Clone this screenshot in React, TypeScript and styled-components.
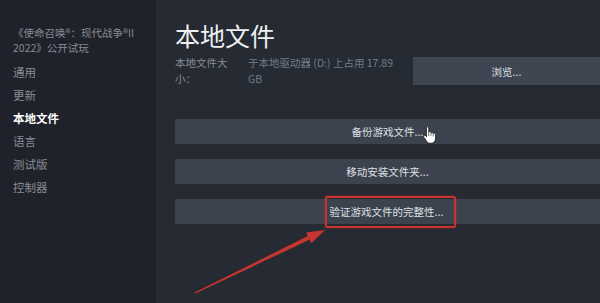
import styled, { createGlobalStyle } from 'styled-components';

const GlobalStyle = createGlobalStyle`
  html, body {
    margin: 0;
    padding: 0;
    background: #262a33;
  }
  body {
    font-family: "Noto Sans CJK SC", "Noto Sans", sans-serif;
  }
`;

const Page = styled.div`
  position: relative;
  display: flex;
  width: 600px;
  height: 303px;
  overflow: hidden;
  background: #262a33;
`;

const Sidebar = styled.nav`
  width: 156px;
  flex-shrink: 0;
  padding: 25px 0 0 13px;
  box-sizing: border-box;
  background: #1f222a;
  display: flex;
  flex-direction: column;
`;

const GameTitle = styled.div`
  width: 124px;
  font-size: 10.5px;
  line-height: 15px;
  color: #868c95;
  margin-bottom: 6px;
`;

const NavItem = styled.div<{ $active?: boolean }>`
  height: 23px;
  line-height: 23px;
  font-size: 11.5px;
  color: ${(p) => (p.$active ? '#ffffff' : '#878d96')};
  font-weight: ${(p) => (p.$active ? 700 : 400)};
`;

const Main = styled.main`
  flex: 1;
  padding: 22px 0 0 19px;
  display: flex;
  flex-direction: column;
`;

const Title = styled.h1`
  margin: 0;
  font-size: 25px;
  line-height: 26px;
  font-weight: 400;
  color: #eef0f2;
`;

const InfoRow = styled.div`
  display: flex;
  align-items: flex-start;
  margin-top: 7px;
`;

const InfoLabel = styled.div`
  width: 58px;
  margin-right: 15px;
  font-size: 10.5px;
  line-height: 16px;
  color: #878d96;
`;

const InfoValue = styled.div`
  width: 157px;
  margin-right: 8px;
  font-size: 10.5px;
  line-height: 16px;
  color: #6f7c8c;
`;

const Button = styled.div<{ $height?: number }>`
  position: relative;
  display: flex;
  align-items: center;
  justify-content: center;
  height: ${(p) => p.$height ?? 25}px;
  background: #3d434e;
  color: #dde0e4;
  font-size: 10.5px;
  cursor: pointer;
`;

const BrowseButton = styled(Button)`
  flex: 1;
  margin-top: 2px;
  background: #3f4551;
`;

const ActionList = styled.div`
  display: flex;
  flex-direction: column;
  gap: 15px;
  margin-top: 32px;
`;

const Label = styled.span`
  position: relative;
`;

const Highlight = styled.span`
  margin: -4px 0 -4px 6px;
  padding: 6px 11px 7px 3px;
  border: 2px solid #c8332e;
  border-radius: 2px;
  box-shadow: 0 0 2px rgba(200, 51, 46, 0.6);
`;

const Cursor = styled.svg`
  position: absolute;
  left: 71px;
  top: 2px;
  width: 13px;
  height: 18px;
`;

const Annotation = styled.svg`
  position: absolute;
  left: 0;
  top: 0;
  width: 600px;
  height: 303px;
  pointer-events: none;
`;

function HandCursor() {
  return (
    <Cursor viewBox="0 0 15 20">
      <path
        d="M4 2C4 1 4.6 0.5 5.3 0.5C6 0.5 6.6 1 6.6 2V7C6.6 6.3 7.2 5.8 7.9 5.8C8.6 5.8 9.2 6.3 9.2 7V8C9.2 7.3 9.8 6.8 10.5 6.8C11.2 6.8 11.8 7.3 11.8 8V9C11.8 8.3 12.4 7.8 13.1 7.8C13.8 7.8 14.4 8.3 14.4 9V14C14.4 17 12.5 19.5 9.5 19.5H8C6 19.5 5 18.5 4 17L1 12.5C0.6 11.8 0.8 11 1.5 10.6C2.2 10.2 3 10.5 3.5 11.2L4 12Z"
        fill="#ffffff"
        stroke="#15171b"
        strokeWidth="0.9"
        strokeLinejoin="round"
      />
      <path d="M6.6 7V11M9.2 8V11M11.8 9V11.5" stroke="#15171b" strokeWidth="0.7" />
    </Cursor>
  );
}

export default function App() {
  return (
    <>
      <GlobalStyle />
      <Page>
        <Sidebar>
          <GameTitle>《使命召唤®：现代战争®II 2022》公开试玩</GameTitle>
          <NavItem>通用</NavItem>
          <NavItem>更新</NavItem>
          <NavItem $active>本地文件</NavItem>
          <NavItem>语言</NavItem>
          <NavItem>测试版</NavItem>
          <NavItem>控制器</NavItem>
        </Sidebar>

        <Main>
          <Title>本地文件</Title>
          <InfoRow>
            <InfoLabel>本地文件大小：</InfoLabel>
            <InfoValue>于本地驱动器 (D:) 上占用 17.89 GB</InfoValue>
            <BrowseButton $height={28}>浏览...</BrowseButton>
          </InfoRow>

          <ActionList>
            <Button>
              <Label>
                备份游戏文件...
                <HandCursor />
              </Label>
            </Button>
            <Button>移动安装文件夹...</Button>
            <Button>
              <Highlight>验证游戏文件的完整性...</Highlight>
            </Button>
          </ActionList>
        </Main>

        <Annotation viewBox="0 0 600 303">
          <polygon points="194.6,292.6 195.4,293.4 309.9,239.6 307.9,236" fill="#c6352f" />
          <polygon points="325,230 306.2,232.4 311.4,243.2" fill="#c6352f" />
        </Annotation>
      </Page>
    </>
  );
}
